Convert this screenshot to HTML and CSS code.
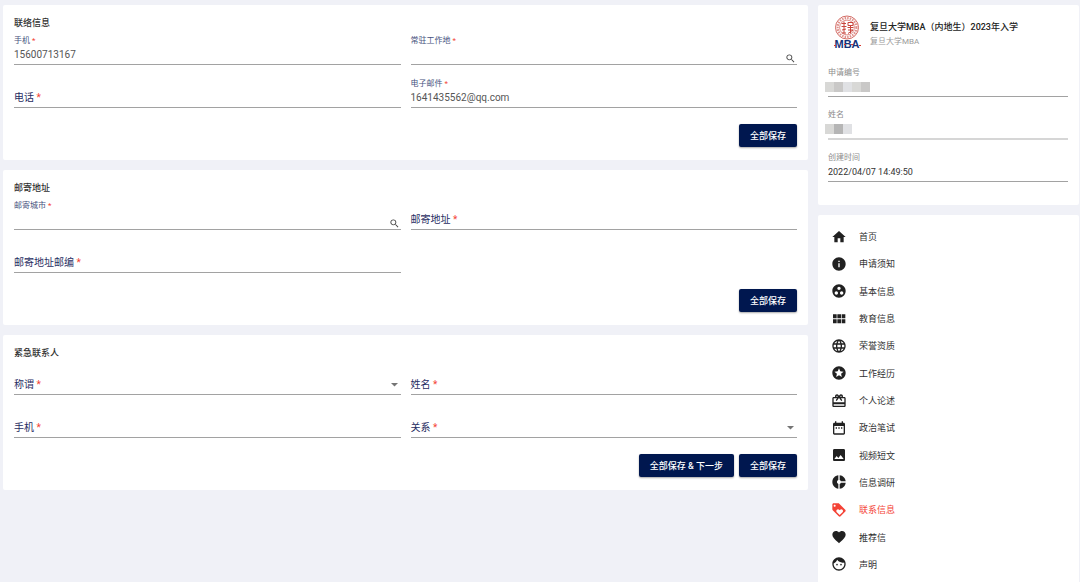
FILE: index.html
```
<!DOCTYPE html>
<html lang="zh-CN">
<head>
  <meta charset="utf-8">
  <meta name="viewport" content="width=device-width, initial-scale=1">
  <title>联系信息</title>
  <link rel="stylesheet" href="styles.css">
</head>
<body>

  <div class="page">
    <main class="content">

      <form class="card form-card">
        <h2>联络信息</h2>
        <div class="fields">
          <div class="field">
            <label for="mobile">手机 <span class="required">*</span></label>
            <input type="text" id="mobile" value="15600713167">
          </div>
          <div class="field">
            <label for="workplace">常驻工作地 <span class="required">*</span></label>
            <input type="text" id="workplace">
            <button type="button" class="search" aria-label="搜索"><svg viewBox="0 0 24 24"><path d="M15.5 14h-.79l-.28-.27C15.41 12.59 16 11.11 16 9.5 16 5.91 13.09 3 9.5 3S3 5.91 3 9.5 5.91 16 9.5 16c1.61 0 3.09-.59 4.23-1.57l.27.28v.79l5 4.99L20.49 19l-4.99-5zm-6 0C7.01 14 5 11.99 5 9.5S7.01 5 9.5 5 14 7.01 14 9.5 11.99 14 9.5 14z"/></svg></button>
          </div>
          <div class="field empty">
            <label for="phone">电话 <span class="required">*</span></label>
            <input type="text" id="phone">
          </div>
          <div class="field">
            <label for="email">电子邮件 <span class="required">*</span></label>
            <input type="email" id="email" value="1641435562@qq.com">
          </div>
        </div>
        <div class="actions">
          <button type="button" class="btn">全部保存</button>
        </div>
      </form>

      <form class="card form-card">
        <h2>邮寄地址</h2>
        <div class="fields">
          <div class="field">
            <label for="city">邮寄城市 <span class="required">*</span></label>
            <input type="text" id="city">
            <button type="button" class="search" aria-label="搜索"><svg viewBox="0 0 24 24"><path d="M15.5 14h-.79l-.28-.27C15.41 12.59 16 11.11 16 9.5 16 5.91 13.09 3 9.5 3S3 5.91 3 9.5 5.91 16 9.5 16c1.61 0 3.09-.59 4.23-1.57l.27.28v.79l5 4.99L20.49 19l-4.99-5zm-6 0C7.01 14 5 11.99 5 9.5S7.01 5 9.5 5 14 7.01 14 9.5 11.99 14 9.5 14z"/></svg></button>
          </div>
          <div class="field empty">
            <label for="address">邮寄地址 <span class="required">*</span></label>
            <input type="text" id="address">
          </div>
          <div class="field empty">
            <label for="postcode">邮寄地址邮编 <span class="required">*</span></label>
            <input type="text" id="postcode">
          </div>
        </div>
        <div class="actions">
          <button type="button" class="btn">全部保存</button>
        </div>
      </form>

      <form class="card form-card">
        <h2>紧急联系人</h2>
        <div class="fields">
          <div class="field empty">
            <label for="salutation">称谓 <span class="required">*</span></label>
            <select id="salutation"><option value=""></option><option>先生</option><option>女士</option></select>
            <svg class="arrow" viewBox="0 0 8 4"><path d="M0 0h8L4 4z"/></svg>
          </div>
          <div class="field empty">
            <label for="contactName">姓名 <span class="required">*</span></label>
            <input type="text" id="contactName">
          </div>
          <div class="field empty">
            <label for="contactMobile">手机 <span class="required">*</span></label>
            <input type="text" id="contactMobile">
          </div>
          <div class="field empty">
            <label for="relation">关系 <span class="required">*</span></label>
            <select id="relation"><option value=""></option><option>父母</option><option>配偶</option></select>
            <svg class="arrow" viewBox="0 0 8 4"><path d="M0 0h8L4 4z"/></svg>
          </div>
        </div>
        <div class="actions">
          <button type="button" class="btn">全部保存 &amp; 下一步</button>
          <button type="button" class="btn">全部保存</button>
        </div>
      </form>

    </main>

    <aside class="sidebar">
      <section class="card profile">
        <div class="program">
          <svg class="logo" viewBox="0 0 28 34">
            <g fill="none" stroke="#c8453c">
              <circle cx="14" cy="12.5" r="11.5" stroke-width=".8"/>
              <circle cx="14" cy="12.5" r="9.4" stroke-width="2.2" stroke-dasharray="1.5 1.1" opacity=".6"/>
              <circle cx="14" cy="12.5" r="7.4" stroke-width=".6"/>
              <path stroke-width="1" d="M8.500 8.500h4.500M11 6.500v12M8.500 11.500h5M9 15l4-1M9 18h4M15 7.500h5v3h-5zM14.500 12.500h6M17.500 10.500v8M15 15h5M15 18.500l5-3.500"/>
            </g>
            <text class="logo-text" x="14" y="33" text-anchor="middle">MBA</text>
            <path stroke="#d8382f" stroke-width="1" d="M1 30.500h2M11 29.500h2M18 29.500h2M26 30.500h2"/>
          </svg>
          <div>
            <h1>复旦大学MBA（内地生）2023年入学</h1>
            <p>复旦大学MBA</p>
          </div>
        </div>
        <div class="info">
          <div class="field">
            <span class="caption">申请编号</span>
            <span class="mosaic"><i class="m2"></i><i class="m3"></i><i class="m1"></i><i class="m2"></i><i class="m3"></i></span>
          </div>
          <div class="field masked">
            <span class="caption">姓名</span>
            <span class="mosaic"><i class="m2"></i><i class="m4"></i><i class="m1"></i></span>
          </div>
          <div class="field">
            <label for="created">创建时间</label>
            <input type="text" id="created" value="2022/04/07 14:49:50" readonly>
          </div>
        </div>
      </section>

      <nav class="card menu">
        <a href="#home"><svg viewBox="0 0 24 24"><path d="M10 20v-6h4v6h5v-8h3L12 3 2 12h3v8z"/></svg>首页</a>
        <a href="#notice"><svg viewBox="0 0 24 24"><path d="M12 2C6.48 2 2 6.48 2 12s4.480 10 10 10 10-4.480 10-10S17.520 2 12 2zm1 15h-2v-6h2v6zm0-8h-2V7h2v2z"/></svg>申请须知</a>
        <a href="#basic"><svg viewBox="0 0 24 24"><path d="M12 2C6.48 2 2 6.48 2 12s4.480 10 10 10 10-4.480 10-10S17.520 2 12 2zM8 17.500c-1.380 0-2.500-1.120-2.500-2.500s1.120-2.500 2.500-2.500 2.500 1.120 2.500 2.500-1.120 2.500-2.500 2.500zM9.500 8c0-1.380 1.120-2.500 2.500-2.500s2.500 1.120 2.500 2.500-1.120 2.500-2.500 2.500S9.500 9.380 9.500 8zm6.500 9.500c-1.380 0-2.500-1.120-2.500-2.500s1.120-2.500 2.500-2.500 2.500 1.120 2.500 2.500-1.120 2.500-2.500 2.500z"/></svg>基本信息</a>
        <a href="#education"><svg viewBox="0 0 24 24"><path d="M3 11h5.500V5H3v6zm0 7.500h5.500v-6H3v6zm6.500 0H15v-6H9.500v6zm6.500 0h5.500v-6H16v6zM9.500 11H15V5H9.500v6zM16 5v6h5.500V5H16z"/></svg>教育信息</a>
        <a href="#honor"><svg viewBox="0 0 24 24"><path d="M11.99 2C6.47 2 2 6.48 2 12s4.47 10 9.99 10C17.52 22 22 17.52 22 12S17.52 2 11.99 2zm6.93 6h-2.95c-.32-1.25-.78-2.45-1.38-3.56 1.84.63 3.37 1.91 4.33 3.56zM12 4.04c.83 1.2 1.48 2.53 1.91 3.96h-3.82c.43-1.43 1.08-2.76 1.91-3.96zM4.26 14C4.1 13.36 4 12.69 4 12s.1-1.36.26-2h3.38c-.08.66-.14 1.32-.14 2 0 .68.06 1.34.14 2H4.26zm.82 2h2.95c.32 1.25.78 2.45 1.38 3.56-1.84-.63-3.37-1.9-4.33-3.56zm2.95-8H5.08c.96-1.66 2.49-2.93 4.33-3.56C8.81 5.55 8.35 6.75 8.03 8zM12 19.96c-.83-1.2-1.48-2.53-1.91-3.96h3.82c-.43 1.43-1.08 2.76-1.91 3.96zM14.34 14H9.66c-.09-.66-.16-1.32-.16-2 0-.68.07-1.35.16-2h4.68c.09.65.16 1.32.16 2 0 .68-.07 1.34-.16 2zm.25 5.56c.6-1.11 1.06-2.31 1.38-3.56h2.95c-.96 1.65-2.49 2.93-4.33 3.56zM16.36 14c.08-.66.14-1.32.14-2 0-.68-.06-1.34-.14-2h3.38c.16.64.26 1.31.26 2s-.1 1.36-.26 2h-3.38z"/></svg>荣誉资质</a>
        <a href="#work"><svg viewBox="0 0 24 24"><path d="M11.99 2C6.47 2 2 6.48 2 12s4.47 10 9.99 10C17.52 22 22 17.52 22 12S17.52 2 11.99 2zm4.24 16L12 15.45 7.77 18l1.12-4.81-3.73-3.23 4.92-.42L12 5l1.92 4.53 4.92.42-3.73 3.23L16.23 18z"/></svg>工作经历</a>
        <a href="#statement"><svg viewBox="0 0 24 24"><path d="M20 6h-2.18c.11-.31.18-.65.18-1 0-1.66-1.34-3-3-3-1.05 0-1.96.54-2.5 1.35l-.5.67-.5-.68C10.96 2.54 10.05 2 9 2 7.34 2 6 3.34 6 5c0 .35.07.69.18 1H4c-1.11 0-1.99.89-1.99 2L2 19c0 1.11.89 2 2 2h16c1.11 0 2-.89 2-2V8c0-1.11-.89-2-2-2zm-5-2c.55 0 1 .45 1 1s-.45 1-1 1-1-.45-1-1 .45-1 1-1zM9 4c.55 0 1 .45 1 1s-.45 1-1 1-1-.45-1-1 .45-1 1-1zm11 15H4v-2h16v2zm0-5H4V8h5.08L7 10.83 8.62 12 11 8.76l1-1.36 1 1.36L15.38 12 17 10.83 14.92 8H20v6z"/></svg>个人论述</a>
        <a href="#politics"><svg viewBox="0 0 24 24"><path d="M9 11H7v2h2v-2zm4 0h-2v2h2v-2zm4 0h-2v2h2v-2zm2-7h-1V2h-2v2H8V2H6v2H5c-1.11 0-1.99.9-1.99 2L3 20c0 1.1.89 2 2 2h14c1.1 0 2-.9 2-2V6c0-1.1-.9-2-2-2zm0 16H5V9h14v11z"/></svg>政治笔试</a>
        <a href="#video"><svg viewBox="0 0 24 24"><path d="M21 19V5c0-1.1-.9-2-2-2H5c-1.1 0-2 .9-2 2v14c0 1.1.9 2 2 2h14c1.1 0 2-.9 2-2zM8.5 13.5l2.5 3.01L14.5 12l4.5 6H5l3.5-4.5z"/></svg>视频短文</a>
        <a href="#survey"><svg viewBox="0 0 24 24"><path d="M11 9.16V2c-5 .5-9 4.79-9 10s4 9.5 9 10v-7.16c-1-.41-2-1.52-2-2.84s1-2.43 2-2.84zM14.86 11H22c-.48-4.75-4-8.53-9-9v7.16c1 .3 1.52.98 1.86 1.84zM13 14.84V22c5-.47 8.52-4.25 9-9h-7.14c-.34.86-.86 1.54-1.86 1.84z"/></svg>信息调研</a>
        <a href="#contact" class="active" aria-current="page"><svg viewBox="0 0 24 24"><path d="M21.41 11.58l-9-9C12.05 2.22 11.55 2 11 2H4c-1.1 0-2 .9-2 2v7c0 .55.22 1.05.59 1.42l9 9c.36.36.86.58 1.41.58.55 0 1.05-.22 1.41-.59l7-7c.37-.36.59-.86.59-1.41 0-.55-.23-1.06-.59-1.42zM5.5 7C4.67 7 4 6.33 4 5.5S4.67 4 5.5 4 7 4.67 7 5.5 6.33 7 5.5 7zm11.77 8.27L13 19.54l-4.27-4.27C8.28 14.81 8 14.19 8 13.5c0-1.38 1.12-2.5 2.5-2.5.69 0 1.32.28 1.77.74l.73.72.73-.73c.45-.45 1.08-.73 1.77-.73 1.38 0 2.5 1.12 2.5 2.5 0 .69-.28 1.32-.73 1.77z"/></svg>联系信息</a>
        <a href="#recommend"><svg viewBox="0 0 24 24"><path d="M12 21.35l-1.45-1.32C5.4 15.36 2 12.28 2 8.5 2 5.42 4.42 3 7.5 3c1.74 0 3.41.81 4.5 2.09C13.09 3.81 14.76 3 16.5 3 19.58 3 22 5.42 22 8.5c0 3.78-3.4 6.86-8.55 11.54L12 21.35z"/></svg>推荐信</a>
        <a href="#declare"><svg viewBox="0 0 24 24"><path d="M9 11.75c-.69 0-1.25.56-1.25 1.25s.56 1.25 1.25 1.25 1.25-.56 1.25-1.25-.56-1.25-1.25-1.25zm6 0c-.69 0-1.25.56-1.25 1.25s.56 1.25 1.25 1.25 1.25-.56 1.25-1.25-.56-1.25-1.25-1.25zM12 2C6.48 2 2 6.48 2 12s4.48 10 10 10 10-4.48 10-10S17.52 2 12 2zm0 18c-4.41 0-8-3.59-8-8 0-.29.02-.58.05-.86 2.36-1.05 4.23-2.98 5.21-5.37C11.07 8.33 14.05 10 17.42 10c.78 0 1.53-.09 2.25-.26.21.71.33 1.47.33 2.26 0 4.41-3.59 8-8 8z"/></svg>声明</a>
      </nav>
    </aside>
  </div>

</body>
</html>
```
FILE: styles.css
```
* {
  box-sizing: border-box;
}
body {
  margin: 0;
  background: #f0f1f7;
  color: #303030;
  font-family: Roboto, "Noto Sans CJK SC", sans-serif;
  font-size: 9px;
}
h1, h2, p {
  margin: 0;
}
button, input, select {
  font-family: inherit;
}
.page {
  display: grid;
  grid-template-columns: minmax(0, 1fr) 261px;
  gap: 10px;
  min-height: 100vh;
  padding: 5px 1px 0 3px;
}
.content, .sidebar {
  display: flex;
  flex-direction: column;
  gap: 10px;
}
.card {
  background: #fff;
  border-radius: 2px;
}

/* forms */
.form-card {
  padding: 11px 11px 13px;
}
.form-card h2 {
  margin-bottom: 4px;
  font-size: 9px;
  font-weight: 500;
  line-height: 14px;
}
.fields {
  display: grid;
  grid-template-columns: 1fr 1fr;
  gap: 12px 10px;
}
.field {
  display: grid;
  grid-template-columns: minmax(0, 1fr) auto;
  grid-template-rows: 12px 18px;
  border-bottom: 1px solid #a2a2a2;
}
.field label, .caption {
  grid-area: 1 / 1;
  color: #46527d;
  font-size: 8px;
  line-height: 14px;
}
.field.empty label {
  grid-row: 2;
  color: #1f2d62;
  font-size: 10px;
  line-height: 18px;
  pointer-events: none;
}
.field .required {
  color: #f44336;
}
.field input, .field select {
  grid-area: 2 / 1;
  width: 100%;
  padding: 0;
  border: 0;
  outline: 0;
  background: none;
  color: #555;
  font-size: 10px;
  line-height: 18px;
  appearance: none;
}
.field select {
  grid-column: 1 / 3;
}
.search {
  grid-area: 2 / 2;
  align-self: end;
  width: 11px;
  height: 12px;
  margin-right: 1px;
  padding: 0;
  border: 0;
  background: none;
}
.search svg {
  display: block;
  fill: #444;
}
.arrow {
  grid-area: 2 / 2;
  align-self: center;
  width: 7px;
  margin-right: 3px;
  fill: #757575;
  pointer-events: none;
}
.actions {
  display: flex;
  justify-content: flex-end;
  gap: 5px;
  margin-top: 16px;
}
.btn {
  height: 23px;
  padding: 0 11px;
  border: 0;
  border-radius: 2px;
  background: #00174f;
  box-shadow: 0 1px 2px rgba(0, 0, 0, 0.35);
  color: #fff;
  font-size: 9px;
  font-weight: 500;
  line-height: 20px;
}

/* sidebar */
.profile {
  padding: 10px 11px 23px 10px;
}
.program {
  display: flex;
  gap: 9px;
  height: 51px;
  padding-left: 5px;
}
.logo {
  width: 28px;
  height: 34px;
}
.logo-text {
  fill: #16337a;
  font-family: "Liberation Sans", Arial, sans-serif;
  font-size: 11px;
  font-weight: bold;
}
.program h1 {
  margin-top: 5px;
  color: #222;
  font-size: 9px;
  font-weight: 500;
  line-height: 15px;
}
.program p {
  color: #999;
  font-size: 8px;
  line-height: 14px;
}
.info {
  display: grid;
  gap: 11px;
}
.info label, .info .caption {
  color: #8c8c8c;
}
.info input {
  color: #333;
  font-size: 9px;
}
.info .masked {
  border-bottom: 2px solid #d6d6d6;
}
.mosaic {
  grid-area: 2 / 1;
  display: flex;
  align-self: center;
  margin-left: -3px;
}
.mosaic i {
  width: 9px;
  height: 10px;
}
.m1 { background: #e0e1e4; }
.m2 { background: #d8d8d6; }
.m3 { background: #c9c8c7; }
.m4 { background: #b5b5b5; }

.menu {
  display: flex;
  flex: 1;
  flex-direction: column;
  padding: 8px 13px 4px;
  border-radius: 2px 2px 0 0;
}
.menu a {
  display: flex;
  flex: 1;
  align-items: center;
  gap: 12px;
  min-height: 27px;
  color: #303030;
  text-decoration: none;
}
.menu svg {
  width: 16px;
  height: 16px;
  fill: #212121;
}
.menu .active, .menu .active svg {
  color: #f44336;
  fill: #f44336;
}
```
